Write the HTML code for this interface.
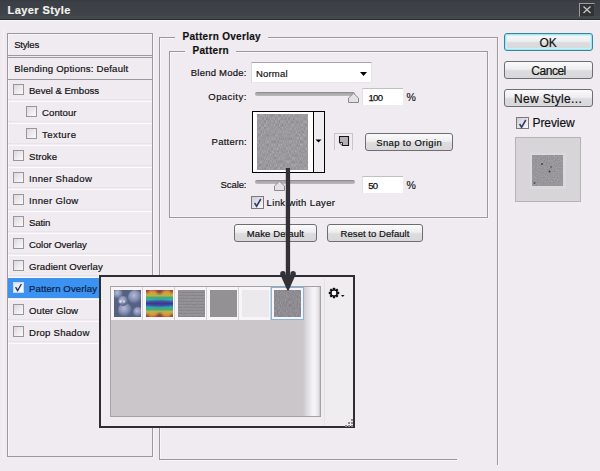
<!DOCTYPE html>
<html><head><meta charset="utf-8"><style>
html,body{margin:0;padding:0;}
body{width:600px;height:471px;overflow:hidden;position:relative;background:#efebf0;font-family:"Liberation Sans",sans-serif;}
.a{position:absolute;}
.t{position:absolute;white-space:nowrap;-webkit-text-stroke:0.18px currentColor;}
</style></head><body>
<svg class="a" style="left:0;top:0" width="0" height="0"><defs>
<filter id="noise" color-interpolation-filters="sRGB" x="0" y="0" width="100%" height="100%"><feTurbulence type="fractalNoise" baseFrequency="0.9 0.35" numOctaves="2" seed="4"/><feColorMatrix type="matrix" values="0.16 0 0 0 0.48  0.16 0 0 0 0.47  0.16 0 0 0 0.49  0 0 0 0 1"/></filter>
<filter id="noiseL" color-interpolation-filters="sRGB" x="0" y="0" width="100%" height="100%"><feTurbulence type="fractalNoise" baseFrequency="0.9" numOctaves="2" seed="7"/><feColorMatrix type="matrix" values="0.12 0 0 0 0.86  0.12 0 0 0 0.85  0.12 0 0 0 0.87  0 0 0 0 1"/></filter>
<filter id="noiseV" color-interpolation-filters="sRGB" x="0" y="0" width="100%" height="100%"><feTurbulence type="fractalNoise" baseFrequency="1.0 0.3" numOctaves="2" seed="11"/><feColorMatrix type="matrix" values="0.24 0 0 0 0.49  0.24 0 0 0 0.48  0.24 0 0 0 0.50  0 0 0 0 1"/></filter>
<linearGradient id="rb" x1="0" y1="0" x2="0" y2="1">
<stop offset="0" stop-color="#c03828"/><stop offset="0.1" stop-color="#e89830"/><stop offset="0.2" stop-color="#b8c040"/><stop offset="0.28" stop-color="#38b068"/><stop offset="0.36" stop-color="#28b0b8"/><stop offset="0.44" stop-color="#2858b0"/><stop offset="0.5" stop-color="#3a2a90"/><stop offset="0.56" stop-color="#2858b0"/><stop offset="0.64" stop-color="#28b0b8"/><stop offset="0.72" stop-color="#38b068"/><stop offset="0.8" stop-color="#b8c040"/><stop offset="0.9" stop-color="#e89830"/><stop offset="1" stop-color="#c03828"/></linearGradient>
<radialGradient id="bub" cx="0.42" cy="0.38" r="0.62"><stop offset="0" stop-color="#bcc4e2"/><stop offset="0.55" stop-color="#8290b8"/><stop offset="1" stop-color="#4a5a82"/></radialGradient>
<filter id="blur1" color-interpolation-filters="sRGB"><feGaussianBlur stdDeviation="1.1"/></filter>
<filter id="noiseP" color-interpolation-filters="sRGB" x="0" y="0" width="100%" height="100%"><feTurbulence type="fractalNoise" baseFrequency="0.9" numOctaves="2" seed="21"/><feColorMatrix type="matrix" values="0.18 0 0 0 0.51  0.18 0 0 0 0.50  0.18 0 0 0 0.52  0 0 0 0 1"/></filter>
</defs></svg>
<div class="a" style="left:0px;top:0px;width:600px;height:19px;background:linear-gradient(#373a40 0px,#3c3f46 2px,#3f434a 15px,#45484d 16px,#45484d 18px)"></div>
<div class="a" style="left:0px;top:19px;width:600px;height:1px;background:#2a2d30"></div>
<div class="a" style="left:0px;top:20px;width:600px;height:1px;background:#f7f6fa"></div>
<div class="t" style="left:7.50px;top:5.19px;font-size:11px;line-height:11px;font-weight:bold;color:#f4f4ee;letter-spacing:0.425px;">Layer Style</div>
<div class="a" style="left:579px;top:3px;width:16px;height:14px;background:#303235;border-top:1px solid #9a9c9e;border-left:1px solid #9a9c9e;border-right:1px solid #44474a;border-bottom:1px solid #44474a;box-sizing:border-box"></div>
<svg class="a" style="left:579px;top:3px" width="16" height="14"><path d="M4.5 3.5 L11.5 10 M11.5 3.5 L4.5 10" stroke="#c4c5c6" stroke-width="1.35"/></svg>
<div class="a" style="left:7px;top:33px;width:146px;height:424px;border:1px solid #9c999d;box-sizing:border-box;background:#efebf0"></div>
<div class="a" style="left:153px;top:34px;width:1px;height:423px;background:#f8f5f9"></div>
<div class="a" style="left:160px;top:38px;width:1px;height:421px;background:#f8f5f9"></div>
<div class="a" style="left:498px;top:38px;width:1px;height:427px;background:#f8f5f9"></div>
<div class="a" style="left:160px;top:460px;width:297px;height:1px;background:#f8f5f9"></div>
<div class="a" style="left:170px;top:52px;width:1px;height:165px;background:#f8f5f9"></div>
<div class="a" style="left:488px;top:52px;width:1px;height:166px;background:#f8f5f9"></div>
<div class="a" style="left:170px;top:218px;width:318px;height:1px;background:#f8f5f9"></div>
<div class="a" style="left:170px;top:216px;width:318px;height:1px;background:#f6f3f7"></div>
<div class="a" style="left:160px;top:38px;width:15px;height:1px;background:#f8f5f9"></div>
<div class="a" style="left:268px;top:38px;width:230px;height:1px;background:#f8f5f9"></div>
<div class="a" style="left:170px;top:52px;width:15px;height:1px;background:#f8f5f9"></div>
<div class="a" style="left:236px;top:52px;width:252px;height:1px;background:#f8f5f9"></div>
<div class="a" style="left:8px;top:34px;width:1px;height:422px;background:#f7f5f8"></div>
<div class="a" style="left:3px;top:30px;width:1px;height:429px;background:#f5f3f6"></div>
<div class="a" style="left:8px;top:34px;width:144px;height:1px;background:#f7f5f8"></div>
<div class="a" style="left:8px;top:55px;width:144px;height:1px;background:#9c999d"></div>
<div class="a" style="left:8px;top:57px;width:144px;height:1px;background:#9c999d"></div>
<div class="a" style="left:8px;top:79px;width:144px;height:1px;background:#9c999d"></div>
<div class="t" style="left:14.20px;top:40.37px;font-size:9.6px;line-height:9.6px;font-weight:normal;color:#111;letter-spacing:-0.225px;">Styles</div>
<div class="t" style="left:14.20px;top:64.37px;font-size:9.6px;line-height:9.6px;font-weight:normal;color:#111;letter-spacing:0.219px;">Blending Options: Default</div>
<div class="a" style="left:8px;top:99px;width:144px;height:1px;background:#e7e4e8"></div>
<div class="a" style="left:8px;top:101px;width:144px;height:1px;background:#fbfafc"></div>
<div class="a" style="left:13px;top:84px;width:11px;height:11px;border:1px solid #999699;box-sizing:border-box;background:linear-gradient(135deg,#dcd9dd,#fbfafc)"></div>
<div class="t" style="left:29.00px;top:86.07px;font-size:9.6px;line-height:9.6px;font-weight:normal;color:#111;letter-spacing:-0.029px;">Bevel & Emboss</div>
<div class="a" style="left:8px;top:121px;width:144px;height:1px;background:#e7e4e8"></div>
<div class="a" style="left:8px;top:123px;width:144px;height:1px;background:#fbfafc"></div>
<div class="a" style="left:26px;top:106px;width:11px;height:11px;border:1px solid #999699;box-sizing:border-box;background:linear-gradient(135deg,#dcd9dd,#fbfafc)"></div>
<div class="t" style="left:42.00px;top:108.07px;font-size:9.6px;line-height:9.6px;font-weight:normal;color:#111;letter-spacing:0.068px;">Contour</div>
<div class="a" style="left:8px;top:143px;width:144px;height:1px;background:#e7e4e8"></div>
<div class="a" style="left:8px;top:145px;width:144px;height:1px;background:#fbfafc"></div>
<div class="a" style="left:26px;top:128px;width:11px;height:11px;border:1px solid #999699;box-sizing:border-box;background:linear-gradient(135deg,#dcd9dd,#fbfafc)"></div>
<div class="t" style="left:42.00px;top:130.07px;font-size:9.6px;line-height:9.6px;font-weight:normal;color:#111;letter-spacing:0.427px;">Texture</div>
<div class="a" style="left:8px;top:165px;width:144px;height:1px;background:#e7e4e8"></div>
<div class="a" style="left:8px;top:167px;width:144px;height:1px;background:#fbfafc"></div>
<div class="a" style="left:13px;top:150px;width:11px;height:11px;border:1px solid #999699;box-sizing:border-box;background:linear-gradient(135deg,#dcd9dd,#fbfafc)"></div>
<div class="t" style="left:29.00px;top:152.07px;font-size:9.6px;line-height:9.6px;font-weight:normal;color:#111;letter-spacing:0.056px;">Stroke</div>
<div class="a" style="left:8px;top:187px;width:144px;height:1px;background:#e7e4e8"></div>
<div class="a" style="left:8px;top:189px;width:144px;height:1px;background:#fbfafc"></div>
<div class="a" style="left:13px;top:172px;width:11px;height:11px;border:1px solid #999699;box-sizing:border-box;background:linear-gradient(135deg,#dcd9dd,#fbfafc)"></div>
<div class="t" style="left:29.00px;top:174.07px;font-size:9.6px;line-height:9.6px;font-weight:normal;color:#111;letter-spacing:0.331px;">Inner Shadow</div>
<div class="a" style="left:8px;top:209px;width:144px;height:1px;background:#e7e4e8"></div>
<div class="a" style="left:8px;top:211px;width:144px;height:1px;background:#fbfafc"></div>
<div class="a" style="left:13px;top:194px;width:11px;height:11px;border:1px solid #999699;box-sizing:border-box;background:linear-gradient(135deg,#dcd9dd,#fbfafc)"></div>
<div class="t" style="left:29.00px;top:196.07px;font-size:9.6px;line-height:9.6px;font-weight:normal;color:#111;letter-spacing:0.316px;">Inner Glow</div>
<div class="a" style="left:8px;top:231px;width:144px;height:1px;background:#e7e4e8"></div>
<div class="a" style="left:8px;top:233px;width:144px;height:1px;background:#fbfafc"></div>
<div class="a" style="left:13px;top:216px;width:11px;height:11px;border:1px solid #999699;box-sizing:border-box;background:linear-gradient(135deg,#dcd9dd,#fbfafc)"></div>
<div class="t" style="left:29.00px;top:218.07px;font-size:9.6px;line-height:9.6px;font-weight:normal;color:#111;letter-spacing:-0.140px;">Satin</div>
<div class="a" style="left:8px;top:253px;width:144px;height:1px;background:#e7e4e8"></div>
<div class="a" style="left:8px;top:255px;width:144px;height:1px;background:#fbfafc"></div>
<div class="a" style="left:13px;top:238px;width:11px;height:11px;border:1px solid #999699;box-sizing:border-box;background:linear-gradient(135deg,#dcd9dd,#fbfafc)"></div>
<div class="t" style="left:29.00px;top:240.07px;font-size:9.6px;line-height:9.6px;font-weight:normal;color:#111;letter-spacing:-0.074px;">Color Overlay</div>
<div class="a" style="left:8px;top:275px;width:144px;height:1px;background:#e7e4e8"></div>
<div class="a" style="left:8px;top:277px;width:144px;height:1px;background:#fbfafc"></div>
<div class="a" style="left:13px;top:260px;width:11px;height:11px;border:1px solid #999699;box-sizing:border-box;background:linear-gradient(135deg,#dcd9dd,#fbfafc)"></div>
<div class="t" style="left:29.00px;top:262.07px;font-size:9.6px;line-height:9.6px;font-weight:normal;color:#111;letter-spacing:0.082px;">Gradient Overlay</div>
<div class="a" style="left:8px;top:278px;width:144px;height:20px;background:#3b92f0"></div>
<div class="a" style="left:8px;top:299px;width:144px;height:1px;background:#fbfafc"></div>
<div class="a" style="left:13px;top:282px;width:11px;height:11px;background:linear-gradient(135deg,#dfe6f0,#fbfcfe);border:1px solid #c8d8f0;box-sizing:border-box"></div>
<svg class="a" style="left:13px;top:282px" width="11" height="11"><path d="M2.6 5.2 L4.6 8.6 L8.4 2" stroke="#1c2f5e" stroke-width="1.3" fill="none"/></svg>
<div class="t" style="left:29.00px;top:284.07px;font-size:9.6px;line-height:9.6px;font-weight:normal;color:#0b1b44;letter-spacing:0.091px;">Pattern Overlay</div>
<div class="a" style="left:8px;top:319px;width:144px;height:1px;background:#e7e4e8"></div>
<div class="a" style="left:8px;top:321px;width:144px;height:1px;background:#fbfafc"></div>
<div class="a" style="left:13px;top:304px;width:11px;height:11px;border:1px solid #999699;box-sizing:border-box;background:linear-gradient(135deg,#dcd9dd,#fbfafc)"></div>
<div class="t" style="left:29.00px;top:306.07px;font-size:9.6px;line-height:9.6px;font-weight:normal;color:#111;letter-spacing:0.056px;">Outer Glow</div>
<div class="a" style="left:8px;top:341px;width:144px;height:1px;background:#e7e4e8"></div>
<div class="a" style="left:8px;top:343px;width:144px;height:1px;background:#fbfafc"></div>
<div class="a" style="left:13px;top:326px;width:11px;height:11px;border:1px solid #999699;box-sizing:border-box;background:linear-gradient(135deg,#dcd9dd,#fbfafc)"></div>
<div class="t" style="left:29.00px;top:328.07px;font-size:9.6px;line-height:9.6px;font-weight:normal;color:#111;letter-spacing:0.222px;">Drop Shadow</div>
<div class="a" style="left:159px;top:37px;width:1px;height:423px;background:#9c999d"></div>
<div class="a" style="left:159px;top:37px;width:16px;height:1px;background:#9c999d"></div>
<div class="a" style="left:268px;top:37px;width:230px;height:1px;background:#9c999d"></div>
<div class="a" style="left:497px;top:37px;width:1px;height:428px;background:#9c999d"></div>
<div class="a" style="left:159px;top:459px;width:298px;height:1px;background:#9c999d"></div>
<div class="t" style="left:182.50px;top:31.54px;font-size:10px;line-height:10px;font-weight:bold;color:#111;letter-spacing:0.304px;">Pattern Overlay</div>
<div class="a" style="left:169px;top:51px;width:1px;height:167px;background:#9c999d"></div>
<div class="a" style="left:169px;top:51px;width:16px;height:1px;background:#9c999d"></div>
<div class="a" style="left:236px;top:51px;width:252px;height:1px;background:#9c999d"></div>
<div class="a" style="left:487px;top:51px;width:1px;height:167px;background:#9c999d"></div>
<div class="a" style="left:169px;top:217px;width:319px;height:1px;background:#9c999d"></div>
<div class="t" style="left:192.50px;top:45.73px;font-size:10px;line-height:10px;font-weight:bold;color:#111;letter-spacing:0.291px;">Pattern</div>
<div class="t" style="left:190.80px;top:68.26px;font-size:9.5px;line-height:9.5px;font-weight:normal;color:#111;letter-spacing:0.217px;">Blend Mode:</div>
<div class="a" style="left:251px;top:62px;width:121px;height:21px;background:#fff;border-top:1px solid #a9a6aa;border-left:1px solid #dcd9dd;border-right:1px solid #e6e3e7;border-bottom:1px solid #e9e6ea;box-sizing:border-box"></div>
<div class="t" style="left:256.00px;top:69.16px;font-size:9.5px;line-height:9.5px;font-weight:normal;color:#111;letter-spacing:0.181px;">Normal</div>
<svg class="a" style="left:359px;top:71px" width="10" height="7"><path d="M1 1 L8 1 L4.5 5 Z" fill="#000"/></svg>
<div class="t" style="left:208.30px;top:91.96px;font-size:9.5px;line-height:9.5px;font-weight:normal;color:#111;letter-spacing:0.451px;">Opacity:</div>
<div class="a" style="left:255px;top:92px;width:100px;height:4px;background:linear-gradient(#858286 0%,#a9a6aa 35%,#bdbabe 100%);border-radius:2px"></div>
<svg class="a" style="left:347px;top:92px" width="13" height="12"><path d="M1.5 10.5 L1.5 6 L6.5 1.2 L11.5 6 L11.5 10.5 Z" fill="#e4e1e5" stroke="#8a888b" stroke-width="1"/></svg>
<div class="a" style="left:362px;top:88px;width:41px;height:17px;background:#fff;border-top:1px solid #c2bfc3;border-left:1px solid #e3e0e4;box-sizing:border-box"></div>
<div class="t" style="left:368.50px;top:93.16px;font-size:9.5px;line-height:9.5px;font-weight:normal;color:#111;letter-spacing:-0.672px;-webkit-text-stroke:0.25px #111;">100</div>
<div class="t" style="left:406.50px;top:91.61px;font-size:10.5px;line-height:10.5px;font-weight:normal;color:#111;letter-spacing:0.000px;-webkit-text-stroke:0.15px #111;">%</div>
<div class="t" style="left:211.60px;top:137.26px;font-size:9.5px;line-height:9.5px;font-weight:normal;color:#111;letter-spacing:0.248px;">Pattern:</div>
<div class="a" style="left:252px;top:111px;width:73px;height:62px;border:1px solid #000;box-sizing:border-box;background:#fff"></div>
<div class="a" style="left:313px;top:111px;width:1px;height:62px;background:#000"></div>
<div class="a" style="left:314px;top:112px;width:10px;height:60px;background:#f0edf1"></div>
<svg class="a" style="left:257px;top:114px" width="51" height="56"><defs><filter id="n1" color-interpolation-filters="sRGB" x="0" y="0" width="100%" height="100%"><feTurbulence type="fractalNoise" baseFrequency="0.9" numOctaves="2" seed="3"/><feColorMatrix type="matrix" values="0 0 0 0 0.55  0 0 0 0 0.54  0 0 0 0 0.56  0 0 0 0 0"/></filter></defs><rect width="51" height="56" filter="url(#noiseV)"/></svg>
<svg class="a" style="left:315px;top:139px" width="8" height="5"><path d="M0.5 0.5 L6.5 0.5 L3.5 3.5 Z" fill="#000"/></svg>
<div class="a" style="left:334px;top:133px;width:19px;height:17px;border-top:1px solid #c9c6ca;border-left:1px solid #c9c6ca;border-right:1px solid #c9c6ca;box-sizing:border-box"></div>
<svg class="a" style="left:338px;top:135px" width="12" height="12"><path d="M1.5 1.5 L10.5 1.5 L10.5 10.5 L4.5 10.5 L1.5 7.5 Z" fill="#b3b1b4" stroke="#161616" stroke-width="1.1"/><path d="M1.5 7.5 L4.5 7.5 L4.5 10.5" fill="#e9e7ea" stroke="#161616" stroke-width="0.9"/></svg>
<div class="a" style="left:365px;top:133px;width:88px;height:18px;border-radius:3px;box-sizing:border-box;background:linear-gradient(#fbfbfc 0%,#eeedef 45%,#dcdbdd 55%,#d8d7da 100%);border:1px solid #6f6d71;"></div><div class="t" style="left:376.20px;top:138.26px;font-size:9.5px;line-height:9.5px;font-weight:normal;color:#111;letter-spacing:0.368px;">Snap to Origin</div>
<div class="t" style="left:220.50px;top:179.66px;font-size:9.5px;line-height:9.5px;font-weight:normal;color:#111;letter-spacing:-0.081px;">Scale:</div>
<div class="a" style="left:255px;top:180px;width:100px;height:4px;background:linear-gradient(#858286 0%,#a9a6aa 35%,#bdbabe 100%);border-radius:2px"></div>
<svg class="a" style="left:273px;top:180px" width="13" height="12"><path d="M1.5 10.5 L1.5 6 L6.5 1.2 L11.5 6 L11.5 10.5 Z" fill="#e4e1e5" stroke="#8a888b" stroke-width="1"/></svg>
<div class="a" style="left:362px;top:176px;width:41px;height:17px;background:#fff;border-top:1px solid #c2bfc3;border-left:1px solid #e3e0e4;box-sizing:border-box"></div>
<div class="t" style="left:368.30px;top:180.86px;font-size:9.5px;line-height:9.5px;font-weight:normal;color:#111;letter-spacing:-0.762px;-webkit-text-stroke:0.25px #111;">50</div>
<div class="t" style="left:406.50px;top:179.51px;font-size:10.5px;line-height:10.5px;font-weight:normal;color:#111;letter-spacing:0.000px;-webkit-text-stroke:0.15px #111;">%</div>
<div class="a" style="left:251px;top:196px;width:13px;height:13px;border:1px solid #7a787b;box-sizing:border-box;background:linear-gradient(135deg,#cfccd3,#f9f8fb)"></div>
<svg class="a" style="left:251px;top:196px" width="13" height="13"><path d="M3.6 7 L5.6 10.2 L9.8 3" stroke="#2a3c6c" stroke-width="1.5" fill="none"/></svg>
<div class="t" style="left:266.50px;top:197.96px;font-size:9.5px;line-height:9.5px;font-weight:normal;color:#111;letter-spacing:0.368px;">Link with Layer</div>
<div class="a" style="left:234px;top:224px;width:83px;height:18px;border-radius:3px;box-sizing:border-box;background:linear-gradient(#fbfbfc 0%,#eeedef 45%,#dcdbdd 55%,#d8d7da 100%);border:1px solid #6f6d71;"></div><div class="t" style="left:246.70px;top:229.16px;font-size:9.5px;line-height:9.5px;font-weight:normal;color:#111;letter-spacing:0.122px;">Make Default</div>
<div class="a" style="left:327px;top:224px;width:96px;height:18px;border-radius:3px;box-sizing:border-box;background:linear-gradient(#fbfbfc 0%,#eeedef 45%,#dcdbdd 55%,#d8d7da 100%);border:1px solid #6f6d71;"></div><div class="t" style="left:340.60px;top:229.16px;font-size:9.5px;line-height:9.5px;font-weight:normal;color:#111;letter-spacing:0.046px;">Reset to Default</div>
<div class="a" style="left:504px;top:33px;width:89px;height:18px;border-radius:3px;box-sizing:border-box;background:linear-gradient(#fbfbfc 0%,#eeedef 45%,#dcdbdd 55%,#d8d7da 100%);border:1px solid #3a84a0;box-shadow:inset 0 0 0 1px #9ee6f2,inset 0 0 1px 2px #c8f2f8;"></div><div class="t" style="left:539.50px;top:36.84px;font-size:12px;line-height:12px;font-weight:normal;color:#111;letter-spacing:0.000px;">OK</div>
<div class="a" style="left:504px;top:61px;width:89px;height:18px;border-radius:3px;box-sizing:border-box;background:linear-gradient(#fbfbfc 0%,#eeedef 45%,#dcdbdd 55%,#d8d7da 100%);border:1px solid #6f6d71;"></div><div class="t" style="left:531.30px;top:64.84px;font-size:12px;line-height:12px;font-weight:normal;color:#111;letter-spacing:-0.472px;">Cancel</div>
<div class="a" style="left:504px;top:89px;width:89px;height:18px;border-radius:3px;box-sizing:border-box;background:linear-gradient(#fbfbfc 0%,#eeedef 45%,#dcdbdd 55%,#d8d7da 100%);border:1px solid #6f6d71;"></div><div class="t" style="left:514.00px;top:92.64px;font-size:12px;line-height:12px;font-weight:normal;color:#111;letter-spacing:0.336px;">New Style...</div>
<div class="a" style="left:516px;top:117px;width:13px;height:12px;border:1px solid #7a787b;box-sizing:border-box;background:linear-gradient(135deg,#cfccd3,#f9f8fb)"></div>
<svg class="a" style="left:516px;top:117px" width="13" height="13"><path d="M3.6 7 L5.6 10.2 L9.8 3" stroke="#2a3c6c" stroke-width="1.5" fill="none"/></svg>
<div class="t" style="left:532.50px;top:116.84px;font-size:12px;line-height:12px;font-weight:normal;color:#111;letter-spacing:-0.081px;">Preview</div>
<div class="a" style="left:515px;top:137px;width:66px;height:65px;border:1px solid #b6b3b7;box-sizing:border-box;background:#d8d5d9"></div>
<div class="a" style="left:530px;top:153px;width:36px;height:36px;background:#dcd9dd"></div>
<svg class="a" style="left:532px;top:155px" width="31" height="31"><rect width="31" height="31" filter="url(#noiseP)"/><circle cx="10" cy="9" r="0.9" fill="#3a3a3a"/><circle cx="19" cy="12" r="0.8" fill="#3a3a3a"/><circle cx="17.5" cy="16.5" r="1" fill="#3a3a3a"/><circle cx="2.5" cy="28" r="1" fill="#555"/></svg>
<div class="a" style="left:99px;top:275px;width:256px;height:153px;border:2px solid #2f2d31;box-sizing:border-box;background:#f0edf1"></div>
<div class="a" style="left:110px;top:286px;width:211px;height:131px;border:1px solid #a5a2a6;box-sizing:border-box;background:#cac6ca"></div>
<div class="a" style="left:111px;top:287px;width:193px;height:33px;background:#f7f5f8"></div>
<div class="a" style="left:303px;top:287px;width:17px;height:129px;background:linear-gradient(90deg,#cac6ca 0%,#dedbdf 25%,#f3f1f5 55%,#f6f3f7 72%,#e4e1e5 90%,#c9c6ca 100%)"></div>
<div class="a" style="left:324px;top:278px;width:1px;height:148px;background:#e6e3e7"></div>
<div class="a" style="left:142px;top:287px;width:1px;height:33px;background:#d6d3d7"></div>
<svg class="a" style="left:114px;top:290px" width="27" height="27"><rect width="27" height="27" fill="#4c5a7e"/><circle cx="21" cy="7" r="7" fill="url(#bub)"/><circle cx="4" cy="4" r="5" fill="url(#bub)"/><circle cx="11" cy="20" r="7" fill="url(#bub)"/><circle cx="24" cy="22" r="5" fill="url(#bub)"/><circle cx="9" cy="11" r="5" fill="url(#bub)"/><circle cx="6.5" cy="11.5" r="1.2" fill="#f4f6fc"/><circle cx="10" cy="11.5" r="1.1" fill="#eceff8"/><rect width="27" height="27" filter="url(#noise)" opacity="0.15"/></svg>
<div class="a" style="left:174px;top:287px;width:1px;height:33px;background:#d6d3d7"></div>
<svg class="a" style="left:146px;top:290px" width="27" height="27"><rect width="27" height="27" fill="url(#rb)"/><g filter="url(#blur1)"><ellipse cx="5.5" cy="3" rx="4.5" ry="3" fill="#d8a838" opacity="0.6"/><ellipse cx="21.5" cy="3" rx="4.5" ry="3" fill="#d8a838" opacity="0.6"/><ellipse cx="13.5" cy="1.5" rx="3" ry="2.5" fill="#703040" opacity="0.8"/><ellipse cx="1" cy="1" rx="2" ry="2" fill="#803028" opacity="0.8"/><ellipse cx="26" cy="1" rx="2" ry="2" fill="#803028" opacity="0.8"/><ellipse cx="5.5" cy="24" rx="4.5" ry="3" fill="#d8a838" opacity="0.6"/><ellipse cx="21.5" cy="24" rx="4.5" ry="3" fill="#d8a838" opacity="0.6"/><ellipse cx="13.5" cy="25.5" rx="3" ry="2.5" fill="#703040" opacity="0.8"/><ellipse cx="1" cy="26" rx="2" ry="2" fill="#803028" opacity="0.8"/><ellipse cx="26" cy="26" rx="2" ry="2" fill="#803028" opacity="0.8"/><ellipse cx="13.5" cy="13.5" rx="11" ry="3" fill="#3a2a90" opacity="0.6"/></g><rect width="27" height="27" filter="url(#noise)" opacity="0.12"/></svg>
<div class="a" style="left:206px;top:287px;width:1px;height:33px;background:#d6d3d7"></div>
<svg class="a" style="left:178px;top:290px" width="27" height="27"><rect width="27" height="27" fill="#959396"/><rect x="0" y="2" width="27" height="1" fill="#858386"/><rect x="0" y="5" width="27" height="1" fill="#858386"/><rect x="0" y="8" width="27" height="1" fill="#858386"/><rect x="0" y="11" width="27" height="1" fill="#858386"/><rect x="0" y="14" width="27" height="1" fill="#858386"/><rect x="0" y="17" width="27" height="1" fill="#858386"/><rect x="0" y="20" width="27" height="1" fill="#858386"/><rect x="0" y="23" width="27" height="1" fill="#858386"/><rect x="0" y="26" width="27" height="1" fill="#858386"/><rect x="0" y="0" width="27" height="1" fill="#9a989b"/><rect x="0" y="3" width="27" height="1" fill="#9a989b"/><rect x="0" y="6" width="27" height="1" fill="#9a989b"/><rect x="0" y="9" width="27" height="1" fill="#9a989b"/><rect x="0" y="12" width="27" height="1" fill="#9a989b"/><rect x="0" y="15" width="27" height="1" fill="#9a989b"/><rect x="0" y="18" width="27" height="1" fill="#9a989b"/><rect x="0" y="21" width="27" height="1" fill="#9a989b"/><rect x="0" y="24" width="27" height="1" fill="#9a989b"/><rect width="27" height="27" filter="url(#noise)" opacity="0.35"/></svg>
<div class="a" style="left:238px;top:287px;width:1px;height:33px;background:#d6d3d7"></div>
<svg class="a" style="left:210px;top:290px" width="27" height="27"><rect width="27" height="27" fill="#939194"/></svg>
<div class="a" style="left:270px;top:287px;width:1px;height:33px;background:#d6d3d7"></div>
<svg class="a" style="left:242px;top:290px" width="27" height="27"><rect width="27" height="27" fill="#ebe9ec"/></svg>
<div class="a" style="left:271px;top:287px;width:33px;height:33px;border:1px solid #86b4dc;box-sizing:border-box;background:#f7f5f8"></div>
<svg class="a" style="left:274px;top:290px" width="27" height="27"><rect width="27" height="27" filter="url(#noise)"/></svg>
<svg class="a" style="left:328px;top:287px" width="12" height="12"><g transform="translate(6,6)"><rect x="-1.15" y="-5.3" width="2.3" height="2.4" rx="0.6" transform="rotate(0)" fill="#111"/><rect x="-1.15" y="-5.3" width="2.3" height="2.4" rx="0.6" transform="rotate(45)" fill="#111"/><rect x="-1.15" y="-5.3" width="2.3" height="2.4" rx="0.6" transform="rotate(90)" fill="#111"/><rect x="-1.15" y="-5.3" width="2.3" height="2.4" rx="0.6" transform="rotate(135)" fill="#111"/><rect x="-1.15" y="-5.3" width="2.3" height="2.4" rx="0.6" transform="rotate(180)" fill="#111"/><rect x="-1.15" y="-5.3" width="2.3" height="2.4" rx="0.6" transform="rotate(225)" fill="#111"/><rect x="-1.15" y="-5.3" width="2.3" height="2.4" rx="0.6" transform="rotate(270)" fill="#111"/><rect x="-1.15" y="-5.3" width="2.3" height="2.4" rx="0.6" transform="rotate(315)" fill="#111"/><circle r="3.0" fill="none" stroke="#111" stroke-width="1.5"/><circle r="2.25" fill="#fff"/></g></svg>
<svg class="a" style="left:341px;top:295px" width="4" height="3"><path d="M0 0 L3.5 0 L1.75 2 Z" fill="#111"/></svg>
<div class="a" style="left:351px;top:419px;width:2px;height:2px;background:#8d8b8e"></div>
<div class="a" style="left:348px;top:422px;width:2px;height:2px;background:#8d8b8e"></div>
<div class="a" style="left:351px;top:422px;width:2px;height:2px;background:#8d8b8e"></div>
<div class="a" style="left:345px;top:425px;width:2px;height:2px;background:#8d8b8e"></div>
<div class="a" style="left:348px;top:425px;width:2px;height:2px;background:#8d8b8e"></div>
<div class="a" style="left:351px;top:425px;width:2px;height:2px;background:#8d8b8e"></div>
<svg class="a" style="left:284px;top:168px" width="8" height="107"><rect x="1.8" y="0" width="4.3" height="107" fill="#333135"/></svg>
<svg class="a" style="left:278.9px;top:268px" width="18" height="25"><circle cx="3.9" cy="5.8" r="2.7" fill="#333135"/><circle cx="14.1" cy="5.8" r="2.7" fill="#333135"/><path d="M1.25 6.6 L16.75 6.6 L9.6 22.5 L8.4 22.5 Z" fill="#333135"/></svg>
</body></html>
